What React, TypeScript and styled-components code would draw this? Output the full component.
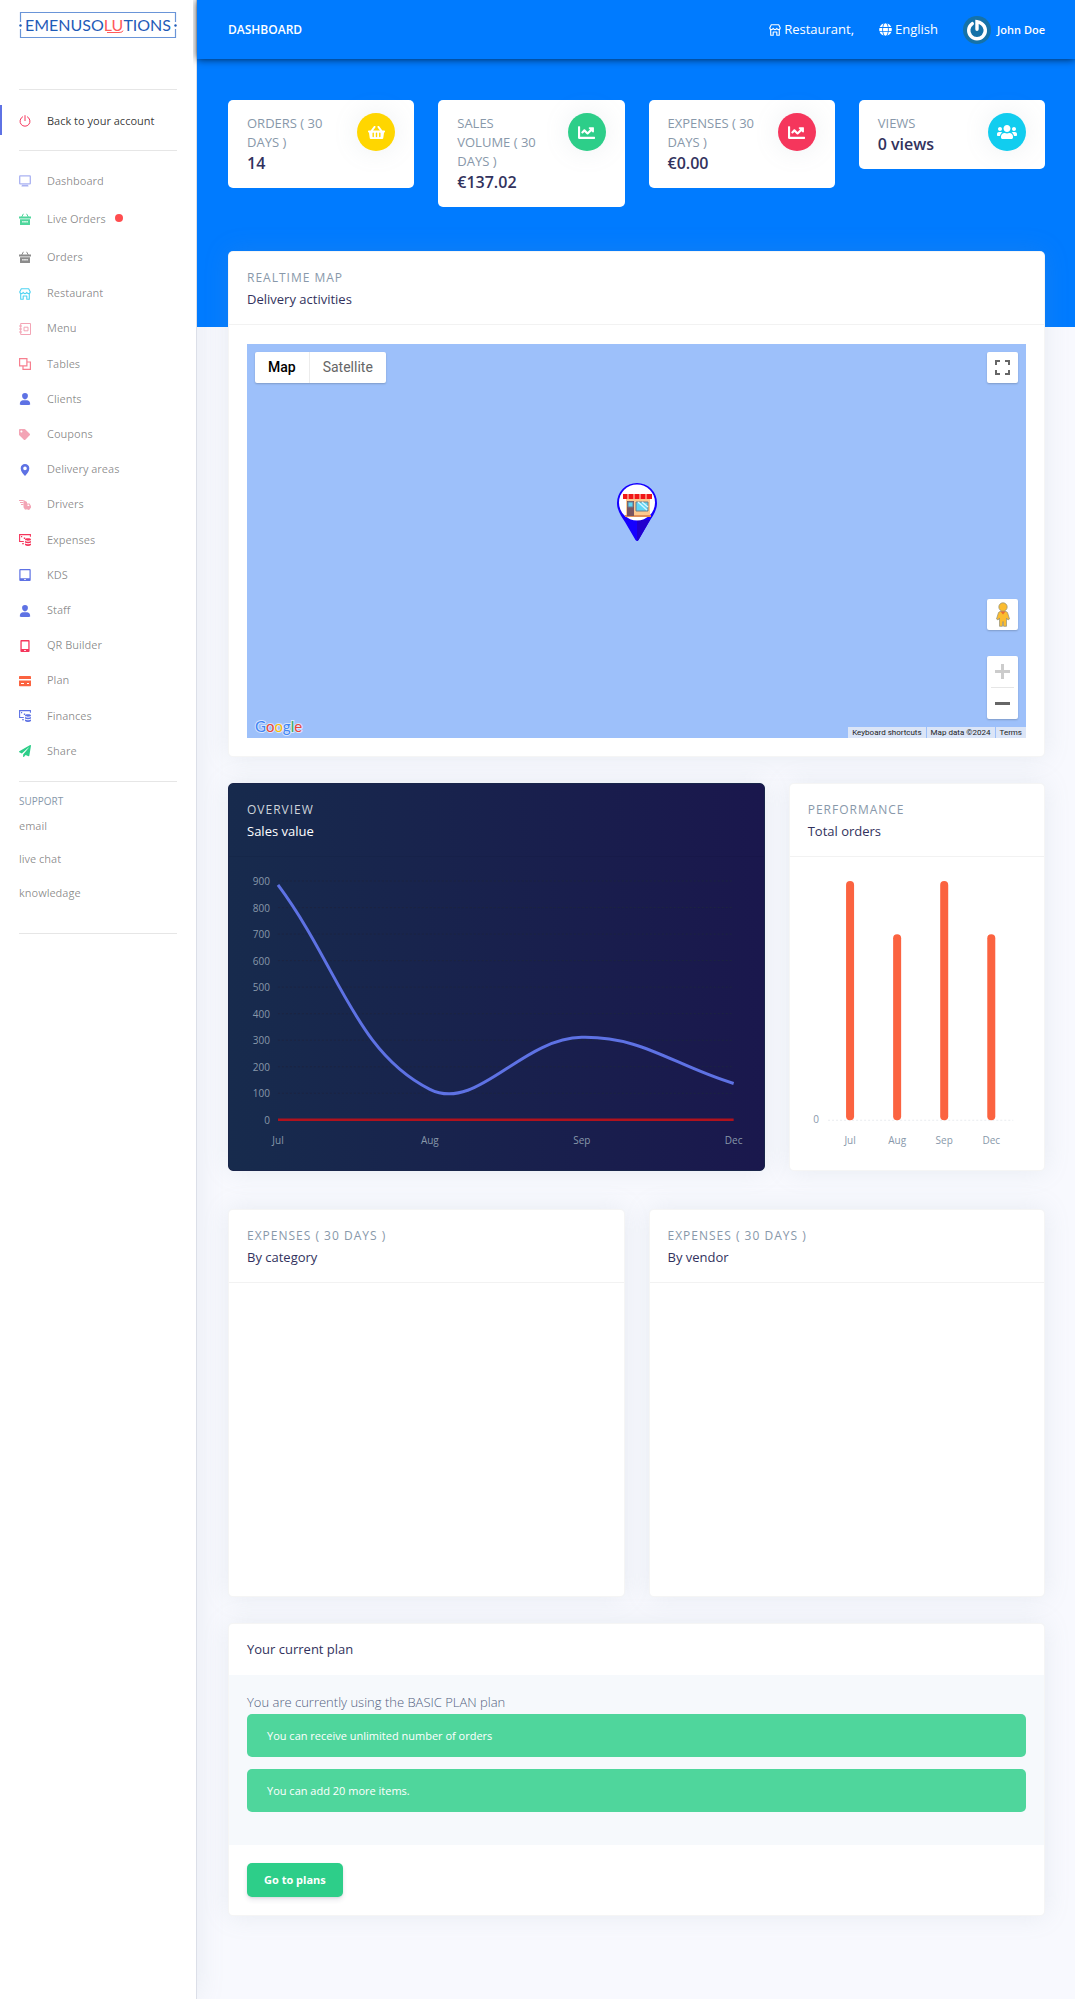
import React from "react";
import styled, { createGlobalStyle } from "styled-components";
import {
  FaShoppingBasket,
  FaChartLine,
  FaUsers,
  FaGlobe,
  FaTag,
  FaPaperPlane,
} from "react-icons/fa";

const colors = {
  blue: "#007bff",
  page: "#f8f9fe",
  ink: "#32325d",
  muted: "#8898aa",
  indigo: "#5e72e4",
  red: "#f5365c",
  pink: "#f3a4b5",
  orange: "#fb6340",
  green: "#2dce89",
  cyan: "#11cdef",
  yellow: "#ffd600",
};

const GlobalStyle = createGlobalStyle`
  *, *::before, *::after { box-sizing: border-box; }
  body {
    margin: 0;
    background: ${colors.page};
    color: #525f7f;
    font: 400 13px/19px "Open Sans", "Noto Sans", sans-serif;
  }
  h1, h2, h3, p, ul { margin: 0; padding: 0; }
  ul { list-style: none; }
  a { color: inherit; text-decoration: none; }
  button { font: inherit; border: 0; cursor: pointer; }
`;

/* ---------- shell ---------- */

const Shell = styled.div`
  display: grid;
  grid-template-columns: 197px minmax(0, 1fr);
  min-height: 100vh;
`;

const Sidebar = styled.aside`
  padding: 11px 19px;
  background: #fff;
  border-right: 1px solid #dcdfe8;
  box-shadow: 0 0 26px rgba(136, 152, 170, 0.15);
`;

const LogoLink = styled.a`
  display: block;
  height: 78px;
  svg { display: block; width: 100%; height: 28px; }
`;

const Rule = styled.hr<{ $space?: number }>`
  height: 1px;
  margin: 0;
  margin-top: ${(p) => p.$space ?? 0}px;
  border: 0;
  background: #e6e6e6;
`;

const NavList = styled.ul<{ $height: number; $top?: number }>`
  display: grid;
  grid-auto-rows: 1fr;
  height: ${(p) => p.$height}px;
  margin-top: ${(p) => p.$top ?? 0}px;
`;

const NavLink = styled.a<{ $active?: boolean }>`
  display: flex;
  align-items: center;
  height: 30px;
  margin-left: -19px;
  padding-left: ${(p) => (p.$active ? 17 : 19)}px;
  border-left: ${(p) => (p.$active ? `2px solid ${colors.indigo}` : "0")};
  color: ${(p) => (p.$active ? "rgba(0,0,0,.8)" : "rgba(0,0,0,.46)")};
  font-size: 11px;
  line-height: 17px;
`;

const NavItem = styled.li`
  display: grid;
  align-items: center;
`;

const NavIcon = styled.span<{ $color: string }>`
  display: flex;
  width: 28px;
  padding-top: 2px;
  color: ${(p) => p.$color};
`;

const LiveDot = styled.span`
  width: 8px;
  height: 8px;
  margin-left: 9px;
  border-radius: 50%;
  background: #ff4d4f;
`;

const SupportTitle = styled.h2`
  margin-top: 11px;
  color: ${colors.muted};
  font-size: 10px;
  font-weight: 400;
  line-height: 16px;
  text-transform: uppercase;
`;

const SupportLink = styled.a`
  display: block;
  color: rgba(0, 0, 0, 0.46);
  font-size: 11px;
  line-height: 17px;
`;

/* ---------- main column ---------- */

const Main = styled.main`
  min-width: 0;
  background: linear-gradient(${colors.blue}, ${colors.blue}) top / 100% 327px no-repeat;
`;

const TopBar = styled.header`
  display: flex;
  align-items: center;
  justify-content: space-between;
  height: 59px;
  padding: 0 30px 0 31px;
  background: ${colors.blue};
  color: #fff;
  box-shadow: 0 0 8px rgba(0, 0, 0, 0.75);
  clip-path: inset(0 0 -10px -4px);
`;

const PageTitle = styled.h1`
  font-size: 12px;
  font-weight: 600;
  line-height: 18px;
  text-transform: uppercase;
`;

const TopLinks = styled.nav`
  display: flex;
  align-items: center;
  gap: 25px;
`;

const TopLink = styled.a<{ $strong?: boolean }>`
  display: flex;
  align-items: center;
  gap: ${(p) => (p.$strong ? 6 : 3)}px;
  font-size: ${(p) => (p.$strong ? 11 : 13)}px;
  font-weight: ${(p) => (p.$strong ? 600 : 400)};
`;

const Content = styled.div`
  padding: 41px 30px 82px 31px;
`;

const StatRow = styled.div`
  display: grid;
  grid-template-columns: repeat(4, 1fr);
  align-items: start;
  gap: 24px;
  margin-bottom: 44px;
`;

const StatCard = styled.section`
  display: flex;
  justify-content: space-between;
  padding: 14px 19px 14px 19px;
  border-radius: 5px;
  background: #fff;
`;

const StatText = styled.div`
  max-width: 88px;
`;

const StatLabel = styled.h2`
  color: ${colors.muted};
  font-size: 13px;
  font-weight: 400;
  line-height: 19px;
  text-transform: uppercase;
`;

const StatValue = styled.p`
  color: ${colors.ink};
  font-size: 16px;
  font-weight: 600;
  line-height: 22px;
`;

const StatIcon = styled.span<{ $color: string }>`
  display: grid;
  place-items: center;
  flex: none;
  width: 38px;
  height: 38px;
  margin-top: -1px;
  border-radius: 50%;
  background: ${(p) => p.$color};
  color: #fff;
  font-size: 17px;
  box-shadow: 0 0 26px rgba(136, 152, 170, 0.15);
`;

const CardGrid = styled.div<{ $gap: number }>`
  display: grid;
  grid-template-columns: repeat(12, minmax(0, 1fr));
  column-gap: 24px;
  margin-bottom: ${(p) => p.$gap}px;
`;

const Card = styled.section<{ $span?: number; $dark?: boolean }>`
  grid-column: span ${(p) => p.$span ?? 12};
  overflow: hidden;
  border: 1px solid ${(p) => (p.$dark ? "#19254a" : "rgba(0,0,0,.04)")};
  border-radius: 5px;
  background: ${(p) => (p.$dark ? "linear-gradient(87deg, #172b4d, #1a174d)" : "#fff")};
  box-shadow: 0 0 26px rgba(136, 152, 170, 0.15);
`;

const CardHeader = styled.header<{ $dark?: boolean }>`
  padding: 16px 18px 15px;
  border-bottom: 1px solid rgba(0, 0, 0, 0.05);
  color: ${(p) => (p.$dark ? "#fff" : colors.ink)};
`;

const Eyebrow = styled.p<{ $dark?: boolean }>`
  margin-bottom: 3px;
  color: ${(p) => (p.$dark ? "#ced4da" : colors.muted)};
  font-size: 12px;
  line-height: 19px;
  letter-spacing: 1px;
  text-transform: uppercase;
`;

const CardTitle = styled.h2<{ $dark?: boolean }>`
  font-size: 13px;
  font-weight: ${(p) => (p.$dark ? 500 : 400)};
  line-height: 19px;
`;

const CardBody = styled.div`
  min-height: 313px;
  padding: 19px 18px;
`;

const Chart = styled.svg`
  display: block;
  width: 100%;
  height: auto;
  overflow: visible;
  text { font-size: 10px; fill: ${colors.muted}; }
`;

/* ---------- map ---------- */

const MapBody = styled.div`
  padding: 19px 18px 18px;
`;

const MapArea = styled.div`
  position: relative;
  height: 394px;
  background: #9dc0fa;
  font-family: Roboto, "Liberation Sans", sans-serif;
`;

const MapTypes = styled.div`
  position: absolute;
  top: 8px;
  left: 8px;
  display: flex;
  border-radius: 2px;
  background: #fff;
  box-shadow: 0 1px 2px rgba(0, 0, 0, 0.2);
`;

const MapType = styled.button<{ $on?: boolean }>`
  height: 31px;
  padding: 0 13px;
  border-right: ${(p) => (p.$on ? "1px solid #ececec" : "0")};
  background: none;
  color: ${(p) => (p.$on ? "#000" : "#666")};
  font-size: 14px;
  font-weight: ${(p) => (p.$on ? 500 : 400)};
`;

const MapTools = styled.div`
  position: absolute;
  top: 8px;
  right: 8px;
  bottom: 19px;
  display: flex;
  flex-direction: column;
  gap: 26px;
`;

const ToolGroup = styled.div<{ $push?: boolean }>`
  margin-bottom: ${(p) => (p.$push ? "auto" : "0")};
  border-radius: 2px;
  background: #fff;
  box-shadow: 0 1px 2px rgba(0, 0, 0, 0.2);
`;

const ToolButton = styled.button`
  display: grid;
  place-items: center;
  width: 31px;
  height: 31px;
  padding: 0;
  background: none;
`;

const ToolRule = styled.hr`
  height: 1px;
  margin: 0 4px;
  border: 0;
  background: #e6e6e6;
`;

const Pin = styled.svg`
  position: absolute;
  top: 138px;
  left: 50%;
  transform: translateX(-50%);
`;

const GoogleMark = styled.svg`
  position: absolute;
  left: 7px;
  bottom: 0;
`;

const Attribution = styled.div`
  position: absolute;
  right: 0;
  bottom: 0;
  display: flex;
  gap: 1px;
  color: #222;
  font-size: 8px;
  line-height: 11px;
  a, span { padding: 0 4px; background: rgba(245, 245, 245, 0.7); }
`;

/* ---------- plan ---------- */

const PlanHeader = styled(CardHeader)`
  padding: 16px 18px;
  border: 0;
`;

const PlanBody = styled.div`
  padding: 18px 18px 21px;
  background: #f6f9fc;
`;

const PlanText = styled.p`
  padding-bottom: 2px;
  font-weight: 300;
  line-height: 19px;
`;

const Notice = styled.p`
  margin-bottom: 12px;
  padding: 13px 20px 12px;
  border-radius: 5px;
  background: #4fd69c;
  color: #fff;
  font-size: 11px;
  line-height: 18px;
`;

const PlanFooter = styled.footer`
  padding: 18px;
`;

const PrimaryButton = styled.button`
  display: block;
  padding: 8px 17px;
  border-radius: 5px;
  background: ${colors.green};
  color: #fff;
  font-size: 11px;
  font-weight: 700;
  line-height: 18px;
  box-shadow: 0 3px 5px rgba(50, 50, 93, 0.11), 0 1px 2px rgba(0, 0, 0, 0.08);
`;

/* ---------- icons ---------- */

const glyphs: Record<string, React.ReactNode> = {
  power: (
    <g fill="none" stroke="currentColor" strokeWidth="1" strokeLinecap="round">
      <path d="M6 .6v5M3.600 1.800a5 5 0 1 0 4.800 0" />
    </g>
  ),
  tv: (
    <>
      <path fill="none" stroke="currentColor" strokeWidth="1.3" d="M1.200.9h9.600q.5 0 .5.500v7q0 .5-.5.500H1.200q-.5 0-.5-.5v-7q0-.5.500-.5Z" />
      <path fill="currentColor" d="M3 9.800h6l.6 1.800H2.400Z" />
    </>
  ),
  basket: (
    <>
      <path fill="none" stroke="currentColor" strokeWidth="1" d="M2.600 4.200 4.400.8M9.400 4.200 7.600.8" />
      <path fill="currentColor" fillRule="evenodd" d="M0 3.600h12v2H0ZM1 6.300h10v5.100q0 .6-.6.600H1.600Q1 12 1 11.400ZM3.300 8v1.500h1.300V8Zm2 0v1.500h1.400V8Zm2.100 0v1.500h1.300V8Z" />
    </>
  ),
  shop: (
    <path fill="none" stroke="currentColor" strokeWidth="1.1" strokeLinejoin="round" d="M2.300.7h7.400l1.600 3.200q-.1 1.600-1.600 1.700-1.400 0-1.800-1.300-.5 1.300-1.900 1.300T4.100 4.300Q3.700 5.600 2.300 5.600.8 5.500.7 3.900ZM1.700 5.600v5.700h2.500V8h3.600v3.300h2.500V5.600" />
  ),
  notebook: (
    <g fill="none" stroke="currentColor" strokeWidth="1">
      <path d="M1.700.5h9.800v11H1.700ZM0 3h3M0 6h3M0 9h3M5 4.200h4v3.600H5Z" />
    </g>
  ),
  squares: (
    <path fill="none" stroke="currentColor" strokeWidth="1.200" d="M.6.6h7.300v7.300H.6ZM8 4h3.400v7.400H4V8" />
  ),
  person: (
    <path fill="currentColor" d="M6 0a2.900 2.900 0 0 1 2.900 3.100C8.900 5 7.600 6.400 6 6.400S3.100 5 3.100 3.100A2.900 2.900 0 0 1 6 0ZM3.700 7.300h4.600q2.900.6 2.900 4.100-.6.600-5.200.6t-5.200-.6q0-3.500 2.900-4.100Z" />
  ),
  pin: (
    <path fill="currentColor" fillRule="evenodd" d="M6 0a4.300 4.300 0 0 1 4.300 4.400C10.300 7.500 7.600 9.800 6 12 4.400 9.800 1.700 7.500 1.700 4.400A4.300 4.300 0 0 1 6 0Zm0 2.600a1.800 1.800 0 1 0 0 3.600 1.800 1.800 0 0 0 0-3.600Z" />
  ),
  delivery: (
    <>
      <path fill="none" stroke="currentColor" strokeWidth="1" d="M0 1.500h4.500M1 3.500h3.500M2 5.500h2.500" />
      <path fill="currentColor" fillRule="evenodd" d="M4.500 1v6.500q0 1.300.8 2a1.600 1.600 0 0 0 2.500.8l.7.200a1.600 1.600 0 0 0 2.700-1L12 8.700V7L10.500 4.500H8V3Zm4 4.500v1.500h2l-.7-1.500Z" />
    </>
  ),
  coins: (
    <>
      <path fill="none" stroke="currentColor" strokeWidth="1.100" d="M4.800 7.500H.6V.6h10.800V2.800" />
      <path fill="currentColor" d="M2 2h1.200v1.200H2ZM4.800 3.500h1.400v1.400H4.800ZM3 9.200h2v1H3Z" />
      <path fill="currentColor" d="M9 4.200c1.800 0 3 .5 3 1.300s-1.200 1.200-3 1.200-3-.4-3-1.200 1.200-1.300 3-1.300ZM6 7q1 .7 3 .7t3-.7v1.500q-1 .7-3 .7t-3-.7Zm0 2.600q1 .7 3 .7t3-.7V11q-1 1-3 1t-3-1Z" />
    </>
  ),
  tablet: (
    <path fill="currentColor" fillRule="evenodd" d="M1.200 0h9.600q.9 0 .9.900v10.200q0 .9-.9.900H1.200q-.9 0-.9-.9V.9Q.3 0 1.200 0Zm.3 1.300v8h9v-8ZM5 10.200v.9h2v-.9Z" />
  ),
  mobile: (
    <path fill="currentColor" fillRule="evenodd" d="M2.300 0h7.400q.9 0 .9.900v10.200q0 .9-.9.900H2.300q-.9 0-.9-.9V.9q0-.9.900-.9Zm.4 1.500v7.600h6.600V1.500ZM5.200 10v1h1.600v-1Z" />
  ),
  card: (
    <path fill="currentColor" fillRule="evenodd" d="M.8 1h10.400q.8 0 .8.800V4H0V1.800Q0 1 .8 1ZM0 5.400h12v5q0 .8-.8.800H.8q-.8 0-.8-.8ZM2 8v1h3V8Zm6 0v1h2V8Z" />
  ),
};

function Glyph({ name, size = 12 }: { name: string; size?: number }) {
  return (
    <svg width={size} height={size} viewBox="0 0 12 12" aria-hidden="true">
      {glyphs[name]}
    </svg>
  );
}

function Logo() {
  return (
    <svg viewBox="0 0 158 28" role="img" aria-label="Emenusolutions">
      <path d="M1.500 11V1.500h155V11M1.500 18v8.500h155V18" fill="none" stroke="#6a95d8" strokeWidth="1.200" />
      <circle cx="1.500" cy="14.500" r="1.200" fill="#1f5bb8" />
      <circle cx="156.500" cy="14.500" r="1.200" fill="#1f5bb8" />
      <text x="79" y="20" textAnchor="middle" fontFamily="Lato" fontSize="16" fill="#1f5bb8">
        EMENUSO<tspan fill="#ff5a5a">LU</tspan>TIONS
      </text>
      <path d="M88 21.500h12q4 0 4-2" fill="none" stroke="#ff5a5a" strokeWidth="1" />
    </svg>
  );
}

function Avatar() {
  return (
    <svg width="28" height="28" viewBox="0 0 28 28" aria-hidden="true">
      <circle cx="14" cy="14" r="14" fill="#1572a8" />
      <path d="M9.300 7.600a8.300 8.300 0 1 0 9.700.2q-2.400-1.900-5-2.100v7.600" fill="none" stroke="#fff" strokeWidth="3.400" strokeLinecap="round" />
    </svg>
  );
}

function StorePin() {
  return (
    <Pin width="42" height="60" viewBox="0 0 42 60" role="img" aria-label="Restaurant location">
      <path d="M21 1a20 20 0 0 1 20 20c0 8-5 14-8 19L22.500 58q-1.500 2-3 0L9 40C6 35 1 29 1 21A20 20 0 0 1 21 1Z" fill="#1500ff" />
      <path d="M21 38 34 38 22.500 58q-.7 1-1.500 1Z" fill="#2200cc" />
      <circle cx="21" cy="20.500" r="18" fill="#fff" />
      <path d="M10 17h24v17H10Z" fill="#fdc98f" />
      <path d="M9 33h26v2H9Z" fill="#e0905a" />
      <path d="M11 19h7v15h-7Z" fill="#7a5560" />
      <path d="M12 20h5v5h-5ZM20 20h12v9H20Z" fill="#5fd6f5" stroke="#6c7d8c" strokeWidth="1" />
      <path d="m22 20 9 8M26 20l6 5" stroke="#d4f5ff" strokeWidth="1.500" />
      <path d="M7 12h29v5H7Z" fill="#f01818" />
      <path d="M12 12v5M18 12v5M24 12v5M30 12v5" stroke="#ffa08c" strokeWidth="1.500" />
    </Pin>
  );
}

function Pegman() {
  return (
    <svg width="14" height="25" viewBox="0 0 14 25" aria-hidden="true">
      <g fill="#fbbc2f" stroke="#8f8f7a" strokeWidth=".7">
        <path d="M4 9.500h6l1.500 1 2 6.500-1.500 1-1.500-2v8.300H7.600L7 19.500l-.6 4.800H3.500V16L2 18 .5 17l2-6.500Z" />
        <circle cx="7" cy="5" r="4.200" />
      </g>
      <path d="M4.500 9.500h5L7 12.500Z" fill="#ea6a2f" />
    </svg>
  );
}

/* ---------- charts ---------- */

type Point = { x: number; y: number };

/* Cubic path through the points, with handles scaled by neighbour distance. */
function smoothPath(points: Point[], tension: number) {
  const handles = points.map((p, i) => {
    const prev = points[i - 1] ?? p;
    const next = points[i + 1] ?? p;
    const before = Math.hypot(p.x - prev.x, p.y - prev.y);
    const after = Math.hypot(next.x - p.x, next.y - p.y);
    const a = (tension * before) / (before + after);
    const b = (tension * after) / (before + after);
    const dx = next.x - prev.x;
    const dy = next.y - prev.y;
    return { inX: p.x - a * dx, inY: p.y - a * dy, outX: p.x + b * dx, outY: p.y + b * dy };
  });
  return points.reduce((d, p, i) => {
    if (i === 0) return `M${p.x} ${p.y}`;
    const from = handles[i - 1];
    const to = handles[i];
    return `${d}C${from.outX} ${from.outY} ${to.inX} ${to.inY} ${p.x} ${p.y}`;
  }, "");
}

const months = ["Jul", "Aug", "Sep", "Dec"];
const sales = [885, 115, 311, 137];
const orders = [9, 7, 9, 7];

function SalesChart() {
  const left = 31;
  const right = 487;
  const yOf = (v: number) => 244 - (v / 900) * 239;
  const xOf = (i: number) => left + (i * (right - left)) / 3;
  const line = smoothPath(sales.map((v, i) => ({ x: xOf(i), y: yOf(v) })), 0.4);
  return (
    <Chart viewBox="0 0 499 275" role="img" aria-label="Sales value per month">
      {Array.from({ length: 10 }, (_, i) => i * 100).map((v) => (
        <g key={v}>
          <line x1={left} x2={right} y1={yOf(v)} y2={yOf(v)} stroke="#1c2440" strokeDasharray="2 2" />
          <text x="23" y={yOf(v) + 4} textAnchor="end">{v}</text>
        </g>
      ))}
      <line x1={left} x2={right} y1={yOf(0)} y2={yOf(0)} stroke="#b0121d" strokeWidth="2.500" />
      <path d={line} fill="none" stroke={colors.indigo} strokeWidth="3" />
      {months.map((m, i) => (
        <text key={m} x={xOf(i)} y="268" textAnchor="middle">{m}</text>
      ))}
    </Chart>
  );
}

function OrdersChart() {
  const xOf = (i: number) => 42 + i * 47;
  return (
    <Chart viewBox="0 0 218 275" role="img" aria-label="Total orders per month">
      <line x1="20" x2="205" y1="244" y2="244" stroke="#e9ecef" strokeDasharray="2 2" />
      <text x="11" y="247" textAnchor="end">0</text>
      {orders.map((v, i) => {
        const h = (v / 9) * 239;
        return (
          <g key={months[i]}>
            <rect x={xOf(i) - 4} y={244 - h} width="8" height={h} rx="4" fill={colors.orange} />
            <text x={xOf(i)} y="268" textAnchor="middle">{months[i]}</text>
          </g>
        );
      })}
    </Chart>
  );
}

/* ---------- data ---------- */

type NavEntry = { label: string; icon: React.ReactNode; color: string; live?: boolean };

const shopNav: NavEntry[] = [
  { label: "Dashboard", icon: <Glyph name="tv" />, color: "#aab2f2" },
  { label: "Live Orders", icon: <Glyph name="basket" />, color: "#4fd69c", live: true },
  { label: "Orders", icon: <Glyph name="basket" />, color: "#8c8c8c" },
];

const manageNav: NavEntry[] = [
  { label: "Restaurant", icon: <Glyph name="shop" />, color: "#4fd3f2" },
  { label: "Menu", icon: <Glyph name="notebook" />, color: colors.pink },
  { label: "Tables", icon: <Glyph name="squares" />, color: "#f77f8f" },
  { label: "Clients", icon: <Glyph name="person" />, color: colors.indigo },
  { label: "Coupons", icon: <FaTag size={11} />, color: colors.pink },
  { label: "Delivery areas", icon: <Glyph name="pin" />, color: colors.indigo },
  { label: "Drivers", icon: <Glyph name="delivery" />, color: colors.pink },
  { label: "Expenses", icon: <Glyph name="coins" />, color: colors.red },
  { label: "KDS", icon: <Glyph name="tablet" />, color: colors.indigo },
  { label: "Staff", icon: <Glyph name="person" />, color: colors.indigo },
  { label: "QR Builder", icon: <Glyph name="mobile" />, color: colors.red },
  { label: "Plan", icon: <Glyph name="card" />, color: colors.orange },
  { label: "Finances", icon: <Glyph name="coins" />, color: colors.indigo },
  { label: "Share", icon: <FaPaperPlane size={12} />, color: colors.green },
];

const stats = [
  { label: "Orders ( 30 days )", value: "14", color: colors.yellow, icon: <FaShoppingBasket /> },
  { label: "Sales volume ( 30 days )", value: "€137.02", color: colors.green, icon: <FaChartLine /> },
  { label: "Expenses ( 30 days )", value: "€0.00", color: colors.red, icon: <FaChartLine /> },
  { label: "Views", value: "0 views", color: colors.cyan, icon: <FaUsers size={20} /> },
];

function NavItems({ entries }: { entries: NavEntry[] }) {
  return (
    <>
      {entries.map((e) => (
        <NavItem key={e.label}>
          <NavLink href="#">
            <NavIcon $color={e.color}>{e.icon}</NavIcon>
            {e.label}
            {e.live && <LiveDot />}
          </NavLink>
        </NavItem>
      ))}
    </>
  );
}

function Heading({ eyebrow, title, dark }: { eyebrow: string; title: string; dark?: boolean }) {
  return (
    <CardHeader $dark={dark}>
      <Eyebrow $dark={dark}>{eyebrow}</Eyebrow>
      <CardTitle $dark={dark}>{title}</CardTitle>
    </CardHeader>
  );
}

export default function App() {
  return (
    <>
      <GlobalStyle />
      <Shell>
        <Sidebar>
          <LogoLink href="#"><Logo /></LogoLink>
          <Rule />
          <NavList $height={30} $top={15}>
            <NavItem>
              <NavLink href="#" $active>
                <NavIcon $color={colors.red}><Glyph name="power" /></NavIcon>
                Back to your account
              </NavLink>
            </NavItem>
          </NavList>
          <Rule $space={15} />
          <NavList $height={114} $top={10}>
            <NavItems entries={shopNav} />
          </NavList>
          <NavList $height={493}>
            <NavItems entries={manageNav} />
          </NavList>
          <Rule $space={13} />
          <SupportTitle>Support</SupportTitle>
          <NavList $height={100}>
            {["email", "live chat", "knowledage"].map((label) => (
              <NavItem key={label}><SupportLink href="#">{label}</SupportLink></NavItem>
            ))}
          </NavList>
          <Rule $space={24} />
        </Sidebar>

        <Main>
          <TopBar>
            <PageTitle>Dashboard</PageTitle>
            <TopLinks>
              <TopLink href="#"><Glyph name="shop" /> Restaurant,</TopLink>
              <TopLink href="#"><FaGlobe size={13} /> English</TopLink>
              <TopLink href="#" $strong><Avatar /> John Doe</TopLink>
            </TopLinks>
          </TopBar>

          <Content>
            <StatRow>
              {stats.map((s) => (
                <StatCard key={s.label}>
                  <StatText>
                    <StatLabel>{s.label}</StatLabel>
                    <StatValue>{s.value}</StatValue>
                  </StatText>
                  <StatIcon $color={s.color}>{s.icon}</StatIcon>
                </StatCard>
              ))}
            </StatRow>

            <CardGrid $gap={26}>
              <Card>
                <Heading eyebrow="Realtime map" title="Delivery activities" />
                <MapBody>
                  <MapArea>
                    <MapTypes>
                      <MapType $on>Map</MapType>
                      <MapType>Satellite</MapType>
                    </MapTypes>
                    <StorePin />
                    <MapTools>
                      <ToolGroup $push>
                        <ToolButton aria-label="Full screen">
                          <svg width="15" height="15" viewBox="0 0 15 15" fill="none" stroke="#666" strokeWidth="2">
                            <path d="M1 5V1h4M10 1h4v4M14 10v4h-4M5 14H1v-4" />
                          </svg>
                        </ToolButton>
                      </ToolGroup>
                      <ToolGroup>
                        <ToolButton aria-label="Street view"><Pegman /></ToolButton>
                      </ToolGroup>
                      <ToolGroup>
                        <ToolButton aria-label="Zoom in">
                          <svg width="15" height="15" viewBox="0 0 15 15" stroke="#ccc" strokeWidth="3">
                            <path d="M0 7.500h15M7.500 0v15" />
                          </svg>
                        </ToolButton>
                        <ToolRule />
                        <ToolButton aria-label="Zoom out">
                          <svg width="15" height="15" viewBox="0 0 15 15" stroke="#666" strokeWidth="3">
                            <path d="M0 7.500h15" />
                          </svg>
                        </ToolButton>
                      </ToolGroup>
                    </MapTools>
                    <GoogleMark width="50" height="22" viewBox="0 0 50 22">
                      <text x="1" y="16" fontFamily="Lato" fontSize="15" stroke="#fff" strokeOpacity=".6" strokeWidth="2" paintOrder="stroke">
                        <tspan fill="#4285f4">G</tspan>
                        <tspan fill="#ea4335">o</tspan>
                        <tspan fill="#fbbc05">o</tspan>
                        <tspan fill="#4285f4">g</tspan>
                        <tspan fill="#34a853">l</tspan>
                        <tspan fill="#ea4335">e</tspan>
                      </text>
                    </GoogleMark>
                    <Attribution>
                      <a href="#">Keyboard shortcuts</a>
                      <span>Map data ©2024</span>
                      <a href="#">Terms</a>
                    </Attribution>
                  </MapArea>
                </MapBody>
              </Card>
            </CardGrid>

            <CardGrid $gap={38}>
              <Card $span={8} $dark>
                <Heading eyebrow="Overview" title="Sales value" dark />
                <CardBody><SalesChart /></CardBody>
              </Card>
              <Card $span={4}>
                <Heading eyebrow="Performance" title="Total orders" />
                <CardBody><OrdersChart /></CardBody>
              </Card>
            </CardGrid>

            <CardGrid $gap={26}>
              <Card $span={6}>
                <Heading eyebrow="Expenses ( 30 days )" title="By category" />
                <CardBody />
              </Card>
              <Card $span={6}>
                <Heading eyebrow="Expenses ( 30 days )" title="By vendor" />
                <CardBody />
              </Card>
            </CardGrid>

            <CardGrid $gap={0}>
              <Card>
                <PlanHeader><CardTitle>Your current plan</CardTitle></PlanHeader>
                <PlanBody>
                  <PlanText>You are currently using the BASIC PLAN plan</PlanText>
                  <Notice>You can receive unlimited number of orders</Notice>
                  <Notice>You can add 20 more items.</Notice>
                </PlanBody>
                <PlanFooter><PrimaryButton>Go to plans</PrimaryButton></PlanFooter>
              </Card>
            </CardGrid>
          </Content>
        </Main>
      </Shell>
    </>
  );
}
